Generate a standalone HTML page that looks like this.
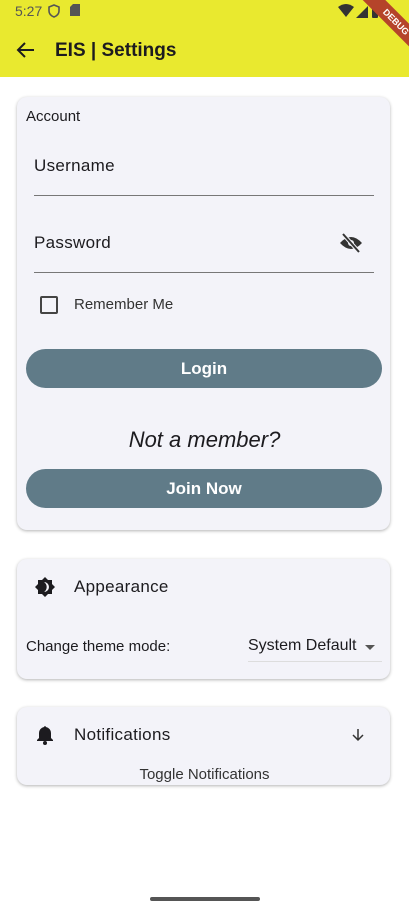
<!DOCTYPE html>
<html><head><meta charset="utf-8"><style>
*{box-sizing:border-box;margin:0;padding:0}
body{width:409px;height:910px;background:#fff;font-family:"Liberation Sans",sans-serif;color:#1c1b1f;position:relative;overflow:hidden}
.abs{position:absolute}
.bar{left:0;top:0;width:409px;height:77px;background:#e9e92f}
.card{background:#f3f3f9;border-radius:10px;box-shadow:0 1px 3px rgba(0,0,0,.3)}
.btn{left:26px;width:356px;height:39px;border-radius:20px;background:#607b88;color:#fff;font-weight:bold;font-size:17px;text-align:center;line-height:39px}
.line{left:34px;width:340px;height:1px;background:#777}
</style></head><body>
<div class="abs bar"></div>
<div class="abs" style="left:15px;top:3px;font-size:14px;color:#555">5:27</div>
<svg class="abs" style="left:48px;top:4px" width="12" height="14" viewBox="0 0 12 14"><path d="M6 1L1 3v4c0 3 2.5 5 5 6 2.5-1 5-3 5-6V3z" fill="none" stroke="#555" stroke-width="1.6"/></svg>
<svg class="abs" style="left:70px;top:4px" width="10" height="12"><path d="M3 0h7v12H0V3z" fill="#555"/></svg>
<svg class="abs" style="left:338px;top:4px" width="40" height="14"><path d="M0 3Q8-3 16 3L8 13z" fill="#333"/><path d="M18 14L30 2V14z" fill="#333"/><rect x="34" y="1" width="6" height="13" rx="1" fill="#333"/></svg>
<div class="abs" style="left:356px;top:14px;width:80px;height:16px;background:#b5442a;transform:rotate(45deg);color:#fff;font-size:9px;font-weight:bold;text-align:center;line-height:16px">DEBUG</div>
<svg class="abs" style="left:16px;top:40px" width="20" height="20" viewBox="0 0 20 20"><path d="M18 10H3M9 3l-7 7 7 7" fill="none" stroke="#1c1b1f" stroke-width="2"/></svg>
<div class="abs" style="left:55px;top:40px;font-size:19px;font-weight:bold">EIS | Settings</div>

<div class="abs card" style="left:17px;top:97px;width:373px;height:433px"></div>
<div class="abs" style="left:26px;top:108px;font-size:15px">Account</div>
<div class="abs" style="left:34px;top:156px;font-size:17px;letter-spacing:.3px">Username</div>
<div class="abs line" style="top:195px"></div>
<div class="abs" style="left:34px;top:233px;font-size:17px;letter-spacing:.3px">Password</div>
<svg class="abs" style="left:339px;top:233px" width="24" height="20" viewBox="0 0 24 20"><path d="M1 10Q12-2 23 10Q12 22 1 10z" fill="#333"/><circle cx="12" cy="10" r="3" fill="#f3f3f9"/><path d="M4 1L20 19" stroke="#f3f3f9" stroke-width="4"/><path d="M4 1L20 19" stroke="#333" stroke-width="2"/></svg>
<div class="abs line" style="top:272px"></div>
<div class="abs" style="left:40px;top:296px;width:18px;height:18px;border:2px solid #444;border-radius:2px"></div>
<div class="abs" style="left:74px;top:296px;font-size:15px;color:#333">Remember Me</div>
<div class="abs btn" style="top:349px">Login</div>
<div class="abs" style="left:0;width:409px;top:427px;text-align:center;font-size:22px;font-style:italic">Not a member?</div>
<div class="abs btn" style="top:469px">Join Now</div>

<div class="abs card" style="left:17px;top:559px;width:373px;height:120px"></div>
<svg class="abs" style="left:34px;top:576px" width="22" height="22" viewBox="0 0 22 22"><path d="M11 1l3 3h4v4l3 3-3 3v4h-4l-3 3-3-3H4v-4l-3-3 3-3V4h4z" fill="#1c1b1f"/><path d="M10 6a5 5 0 0 1 0 10a6 6 0 0 0 0-10z" fill="#f3f3f9"/></svg>
<div class="abs" style="left:74px;top:577px;font-size:17px;letter-spacing:.3px">Appearance</div>
<div class="abs" style="left:26px;top:638px;font-size:15px">Change theme mode:</div>
<div class="abs" style="left:248px;top:637px;font-size:16px">System Default</div>
<svg class="abs" style="left:365px;top:645px" width="10" height="5"><path d="M0 0h10L5 5z" fill="#555"/></svg>
<div class="abs" style="left:248px;top:661px;width:134px;height:1px;background:#ddd"></div>

<div class="abs card" style="left:17px;top:707px;width:373px;height:78px"></div>
<svg class="abs" style="left:36px;top:725px" width="18" height="20" viewBox="0 0 18 20"><path d="M9 1a2 2 0 0 1 1 1a6 6 0 0 1 5 6v5l2 2v1H1v-1l2-2V8a6 6 0 0 1 5-6a2 2 0 0 1 1-1z" fill="#1c1b1f"/><circle cx="9" cy="18" r="2" fill="#1c1b1f"/></svg>
<div class="abs" style="left:74px;top:725px;font-size:17px;letter-spacing:.3px">Notifications</div>
<svg class="abs" style="left:352px;top:728px" width="12" height="14" viewBox="0 0 12 14"><path d="M6 1v11M1 7l5 5 5-5" fill="none" stroke="#333" stroke-width="1.5"/></svg>
<div class="abs" style="left:0;width:409px;top:766px;text-align:center;font-size:15px;color:#333">Toggle Notifications</div>

<div class="abs" style="left:150px;top:897px;width:110px;height:4px;border-radius:2px;background:#555"></div>
</body></html>
